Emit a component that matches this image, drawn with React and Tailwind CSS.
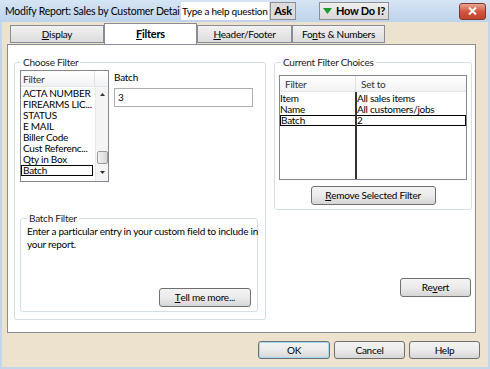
const btn =
  "flex items-center justify-center whitespace-nowrap rounded-[3px] border border-[#707070] bg-gradient-to-b from-[#f3f3f3] via-[#ebebeb] to-[#d6d6d6] text-[10px] text-black";

const Tab = ({ label, w, selected }) => (
  <div
    className={
      selected
        ? "relative z-10 -mb-px flex h-[21px] items-center justify-center border border-b-0 border-[#898c95] bg-white text-[11px] font-bold"
        : "mt-[2px] flex h-[18px] items-center justify-center border border-[#898c95] bg-gradient-to-b from-[#f2f2f2] to-[#dcdcdc] text-[10px]"
    }
    style={{ width: w }}
  >
    {label}
  </div>
);

const Group = ({ label, className, children }) => (
  <div className={"relative rounded-[3px] border border-[#d5dfe5] " + className}>
    <span className="absolute -top-[8px] left-[6px] bg-white px-[2px] text-[10px] leading-[14px] text-[#222]">
      {label}
    </span>
    {children}
  </div>
);

export default function App() {
  const filters = ["ACTA NUMBER", "FIREARMS LIC...", "STATUS", "E MAIL", "Biller Code", "Cust Referenc...", "Qty in Box"];
  return (
    <div
      className="flex h-[369px] w-[490px] flex-col overflow-hidden bg-[#ece2cd] tracking-[-0.25px] text-black"
      style={{ fontFamily: 'Lato, "Liberation Sans", sans-serif' }}
    >
      {/* title bar */}
      <div className="flex h-[22px] shrink-0 items-center bg-gradient-to-b from-[#d6e5f5] to-[#bdd3eb]">
        <span className="ml-[5px] w-[176px] overflow-hidden whitespace-nowrap text-[10.5px] leading-[22px] tracking-[-0.25px]">
          Modify Report: Sales by Customer Detai
        </span>
        <div className="flex h-[18px] w-[88px] items-center overflow-hidden whitespace-nowrap bg-white pl-[1px] text-[10px]">
          Type a help question
        </div>
        <div className="ml-[1px] flex h-[18px] w-[26px] items-center justify-center border border-[#8e8f8f] bg-[#dcdcdc] text-[11px] font-bold">
          Ask
        </div>
        <div className="ml-[23px] flex h-[18px] w-[70px] items-center justify-center gap-[4px] whitespace-nowrap border border-[#8e8f8f] bg-gradient-to-b from-[#f0f0f0] to-[#d8d8d8] text-[11px] font-bold">
          <svg width="9" height="6" viewBox="0 0 9 6">
            <path d="M0 0 H9 L4.5 6 Z" fill="#1a9a2a" />
          </svg>
          How Do I?
        </div>
        <div className="ml-[70px] flex h-[17px] w-[27px] items-center justify-center rounded-[3px] border border-[#7a3a30] bg-gradient-to-b from-[#e8a593] via-[#d4553e] to-[#c0422c]">
          <svg width="9" height="8" viewBox="0 0 9 8">
            <path d="M1 0.5 L8 7.5 M8 0.5 L1 7.5" stroke="white" strokeWidth="2" />
          </svg>
        </div>
      </div>

      {/* body */}
      <div className="flex flex-1 flex-col border-x-2 border-b-[2px] border-[#c3d6ec]">
        <div className="ml-[8px] mt-[1px] flex h-[21px] items-start">
          <Tab label={<><span className="underline">D</span>isplay</>} w={94} />
          <Tab label={<><span className="underline">F</span>ilters</>} w={93} selected />
          <Tab label={<><span className="underline">H</span>eader/Footer</>} w={95} />
          <Tab label={<>Fo<span className="underline">n</span>ts &amp; Numbers</>} w={93} />
        </div>

        <div className="ml-[5px] flex h-[289px] w-[469px] flex-col border border-[#898c95] bg-white">
          <div className="mt-[17px] flex">
            {/* Choose Filter */}
            <Group label="Choose Filter" className="ml-[6px] flex h-[258px] w-[252px] flex-col">
              <div className="mt-[7px] flex">
                <div className="ml-[5px] flex h-[112px] w-[89px] flex-col border border-[#828790] bg-white">
                  <div className="flex h-[16px] shrink-0 border-b border-[#e5e5e5] bg-gradient-to-b from-white to-[#f1f2f4] text-[10px] leading-[16px] text-[#333]">
                    <span className="w-[74px] border-r border-[#e0e0e0] pl-[2px]">Filter</span>
                  </div>
                  <div className="flex flex-1">
                    <div className="flex w-[74px] flex-col overflow-hidden pt-[1px] text-[10px] leading-[11px]">
                      {filters.map((f) => (
                        <div key={f} className="h-[11px] whitespace-nowrap pl-[2px]">
                          {f}
                        </div>
                      ))}
                      <div className="h-[11px] w-[72px] border border-black pl-[1px] leading-[9px]">Batch</div>
                    </div>
                    <div className="relative flex w-[13px] flex-col items-center border-l border-[#e8e8e8] bg-[#f4f4f4]">
                      <svg className="mt-[6px]" width="5" height="3" viewBox="0 0 5 3">
                        <path d="M0 3 L2.5 0 L5 3 Z" fill="#333" />
                      </svg>
                      <div className="mt-[55px] h-[13px] w-[11px] rounded-[2px] border border-[#9a9a9a] bg-gradient-to-r from-[#f0f0f0] to-[#d8d8d8]" />
                      <svg className="mt-[7px]" width="5" height="3" viewBox="0 0 5 3">
                        <path d="M0 0 L5 0 L2.5 3 Z" fill="#333" />
                      </svg>
                    </div>
                  </div>
                </div>
                <div className="ml-[5px] flex flex-col">
                  <span className="text-[10px] leading-[14px]">Batch</span>
                  <div className="mt-[4px] flex h-[19px] w-[139px] items-center border border-[#abadb3] pl-[3px] text-[10px]">3</div>
                </div>
              </div>

              <Group label="Batch Filter" className="ml-[5px] mt-[36px] h-[94px] w-[238px]">
                <p className="ml-[6px] mt-[6px] w-[232px] text-[10px] leading-[13px]">
                  Enter a particular entry in your custom field to include in your report.
                </p>
                <div className={btn + " absolute left-[138px] top-[69px] h-[19px] w-[92px]"}>
                  <span className="underline">T</span>ell me more...
                </div>
              </Group>
            </Group>

            {/* Current Filter Choices */}
            <Group label="Current Filter Choices" className="ml-[8px] flex h-[148px] w-[198px] flex-col items-center">
              <div className="mt-[12px] flex h-[105px] w-[188px] flex-col border border-[#828790] text-[10px]">
                <div className="flex h-[16px] shrink-0 border-b border-[#e5e5e5] bg-gradient-to-b from-white to-[#f1f2f4] leading-[16px] text-[#333]">
                  <span className="w-[76px] border-r border-[#e0e0e0] pl-[5px]">Filter</span>
                  <span className="pl-[5px]">Set to</span>
                </div>
                <div className="relative flex flex-1 flex-col pt-[1px] leading-[11px]">
                  <div className="absolute bottom-0 left-[75px] top-0 w-[2px] bg-[#333]" />
                  <div className="flex h-[11px]">
                    <span className="w-[77px]">Item</span>
                    <span>All sales items</span>
                  </div>
                  <div className="flex h-[11px]">
                    <span className="w-[77px]">Name</span>
                    <span>All customers/jobs</span>
                  </div>
                  <div className="flex h-[11px] border border-black leading-[9px]">
                    <span className="w-[76px]">Batch</span>
                    <span>2</span>
                  </div>
                </div>
              </div>
              <div className={btn + " mt-[6px] h-[19px] w-[125px]"}>
                <span className="underline">R</span>emove Selected Filter
              </div>
            </Group>
          </div>
          <div className="mt-[-42px] flex justify-end pr-[4px]">
            <div className={btn + " h-[19px] w-[71px]"}>
              Re<span className="underline">v</span>ert
            </div>
          </div>
        </div>

        <div className="mt-[8px] flex justify-end gap-[4px] pr-[8px]">
          <div className={btn + " h-[18px] w-[72px] border-[#3c7fb1] shadow-[inset_0_0_0_1px_#9fd9f6]"}>OK</div>
          <div className={btn + " h-[18px] w-[71px]"}>Cancel</div>
          <div className={btn + " h-[18px] w-[71px]"}>Help</div>
        </div>
      </div>
    </div>
  );
}
